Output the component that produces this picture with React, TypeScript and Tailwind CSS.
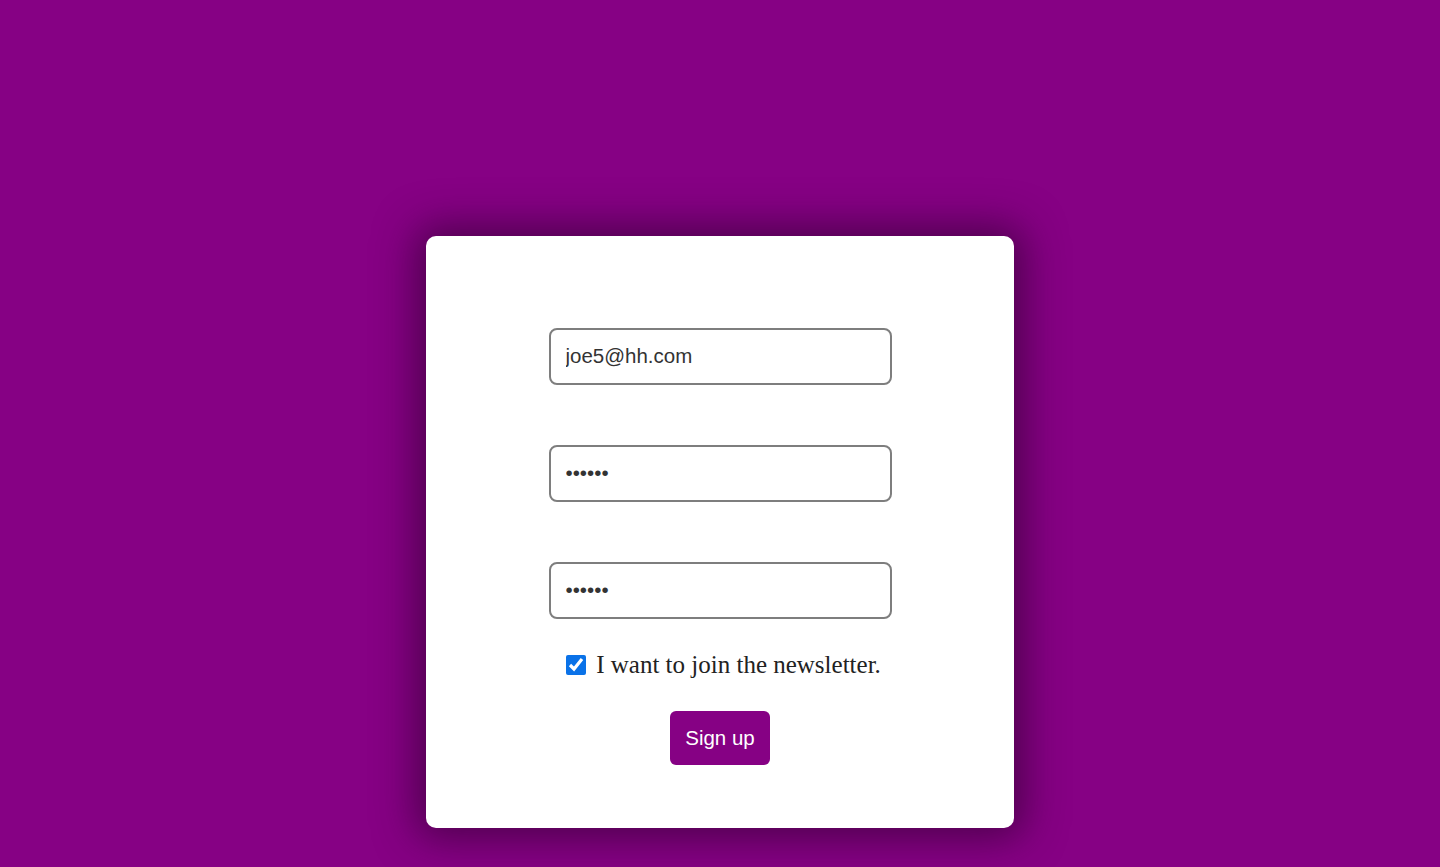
export default function App() {
  return (
    <div className="min-h-[867px] w-full bg-[#860184] pt-[236px]" style={{ fontFamily: '"Liberation Sans", Arial, sans-serif' }}>
      <div className="mx-auto flex h-[592px] w-[588px] flex-col items-center rounded-[10px] bg-white pt-[92px] shadow-[0_0_40px_10px_rgba(40,0,40,0.6)]">
        <input
          type="email"
          defaultValue="joe5@hh.com"
          className="h-[57px] w-[343px] rounded-[8px] border-2 border-[#7e7e7e] bg-white px-[15px] pb-[2px] text-[20.5px] text-[#333] outline-none"
        />
        <input
          type="password"
          defaultValue="123456"
          className="mt-[60px] h-[57px] w-[343px] rounded-[8px] border-2 border-[#7e7e7e] bg-white px-[15px] pb-[2px] text-[20.5px] text-[#333] outline-none"
        />
        <input
          type="password"
          defaultValue="123456"
          className="mt-[60px] h-[57px] w-[343px] rounded-[8px] border-2 border-[#7e7e7e] bg-white px-[15px] pb-[2px] text-[20.5px] text-[#333] outline-none"
        />
        <label className="mt-[31px] flex h-[30px] items-center gap-[10px] pl-[7px] text-[25px] text-[#222]" style={{ fontFamily: '"Liberation Serif", "Times New Roman", serif' }}>
          <input type="checkbox" defaultChecked className="h-[20px] w-[20px] accent-[#0a72e8]" />
          <span>I want to join the newsletter.</span>
        </label>
        <button className="mt-[31px] h-[54px] w-[100px] rounded-[6px] bg-[#860184] text-[20.5px] text-white">
          Sign up
        </button>
      </div>
    </div>
  )
}
